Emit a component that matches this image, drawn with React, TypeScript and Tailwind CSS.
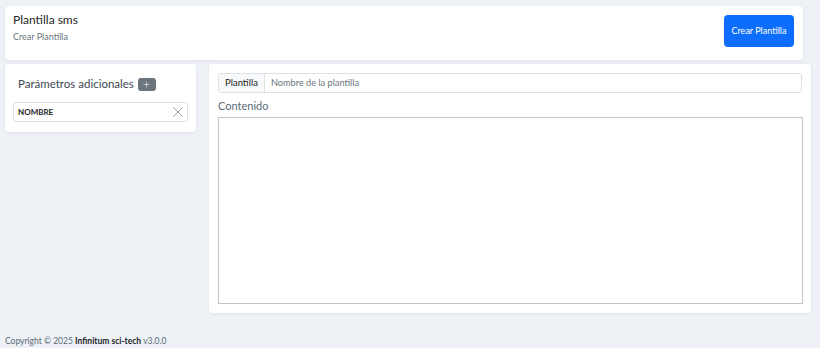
import { X, Plus } from 'lucide-react';

export default function App() {
  return (
    <div
      className="flex h-[348px] w-[820px] flex-col bg-[#eef2f6] pl-[5px] pt-[6px] text-[#212529]"
      style={{ fontFamily: 'Lato, "Liberation Sans", sans-serif' }}
    >
      <div className="flex h-[54px] w-[798px] items-start justify-between rounded bg-white pl-2 pr-[9px] pt-[6px] shadow-[0_1px_4px_rgba(0,0,0,0.06)]">
        <div className="flex flex-col">
          <h1 className="text-[12px] leading-[16px] text-[#262626]">Plantilla sms</h1>
          <p className="mt-[3px] text-[9px] leading-[12px] text-[#6c757d]">Crear Plantilla</p>
        </div>
        <button className="mt-[3px] h-8 w-[70px] rounded bg-[#0d6efd] text-[9px] text-white">
          Crear Plantilla
        </button>
      </div>

      <div className="mt-1 flex items-start gap-[13px]">
        <div className="h-[68px] w-[191px] rounded bg-white px-2 pt-[13px] shadow-[0_1px_4px_rgba(0,0,0,0.06)]">
          <div className="flex items-center gap-[4px] pl-[5px]">
            <span className="text-[11.5px] leading-[14px] text-[#3e4853]">Parámetros adicionales</span>
            <span className="flex h-[13px] w-[18px] items-center justify-center rounded-[3px] bg-[#6c757d] text-white">
              <Plus size={9} strokeWidth={1.5} />
            </span>
          </div>
          <div className="mt-[11px] flex h-5 w-[175px] items-center justify-between rounded-[3px] border border-[#dee2e6] pl-1 pr-0">
            <span className="text-[8px] font-bold text-[#212529]">NOMBRE</span>
            <X size={18} strokeWidth={1} className="text-[#6c757d]" />
          </div>
        </div>

        <div className="flex h-[249px] w-[602px] flex-col rounded bg-white p-[9px] shadow-[0_1px_4px_rgba(0,0,0,0.06)]">
          <div className="flex h-5 w-[584px] overflow-hidden rounded-[3px] border border-[#dee2e6]">
            <span className="flex items-center border-r border-[#dee2e6] bg-[#f8f9fa] px-[6px] text-[9.5px] text-[#212529]">
              Plantilla
            </span>
            <input
              placeholder="Nombre de la plantilla"
              className="flex-1 px-[6px] text-[9.2px] outline-none placeholder:text-[#6c757d]"
            />
          </div>
          <label className="mt-[6px] text-[11px] leading-[14px] text-[#5b6b79]">Contenido</label>
          <textarea className="mt-[4px] h-[187px] w-[585px] resize-none border border-[#c4c4c4] outline-none" />
        </div>
      </div>

      <footer className="mt-auto pb-[1px] text-[8.5px] leading-[12px] text-[#5b6b79]">
        Copyright © 2025 <b className="text-[#212529]">Infinitum sci-tech</b> v3.0.0
      </footer>
    </div>
  );
}
